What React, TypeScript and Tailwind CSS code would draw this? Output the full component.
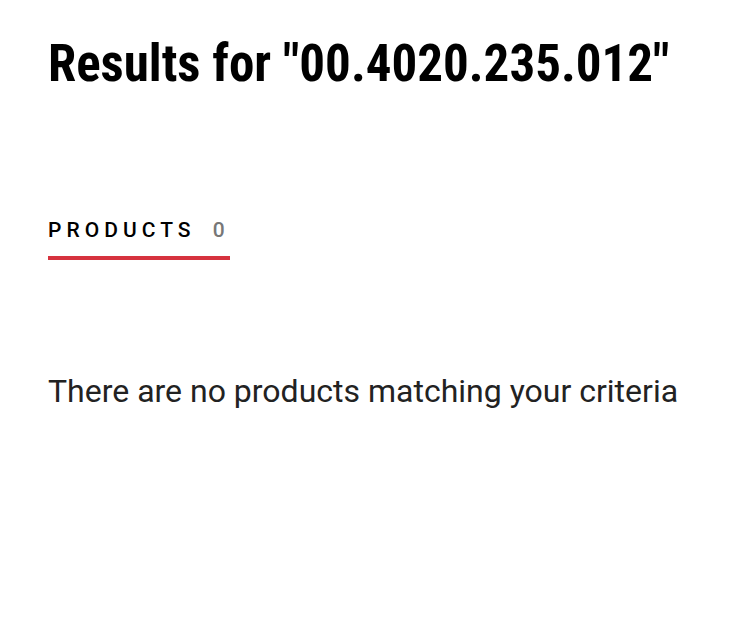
export default function App() {
  return (
    <div className="min-h-[620px] w-[752px] bg-white px-12 pt-[34px]">
      <h1 className="font-['Roboto',sans-serif] font-stretch-condensed text-[51px] font-bold leading-[60px] text-black">
        Results for "00.4020.235.012"
      </h1>
      <div className="mt-[124px] inline-flex flex-col">
        <div className="flex items-center gap-[17px] font-['Roboto',sans-serif] text-[21px] font-medium tracking-[0.24em] leading-6">
          <span className="text-black">PRODUCTS</span>
          <span className="text-[#777]">0</span>
        </div>
        <div className="mt-[14px] h-1 w-[182px] bg-[#d6323e]" />
      </div>
      <p className="mt-[111px] font-['Roboto',sans-serif] text-[32px] leading-10 text-[#222]">
        There are no products matching your criteria
      </p>
    </div>
  );
}
